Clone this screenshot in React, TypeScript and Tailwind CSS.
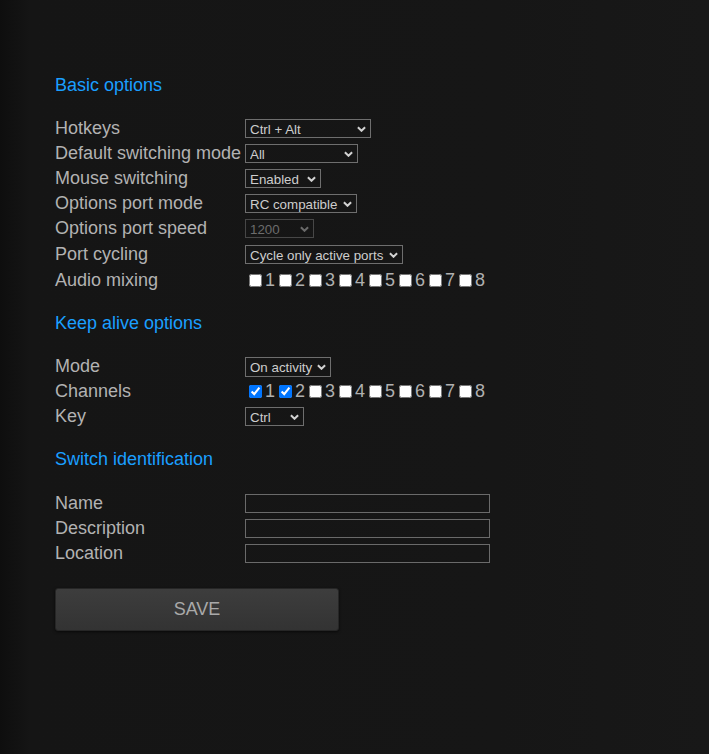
import React from "react";

const Chevron = ({ dim }: { dim?: boolean }) => (
  <svg
    viewBox="0 0 10 6"
    className="pointer-events-none absolute right-[5px] top-1/2 h-[6px] w-[9px] -translate-y-1/2"
  >
    <path
      d="M1 1 L5 5 L9 1"
      fill="none"
      stroke={dim ? "#6a6a6a" : "#d2d2d2"}
      strokeWidth="2.2"
    />
  </svg>
);

const Select = ({
  options,
  width,
  tall,
  disabled,
}: {
  options: string[];
  width: string;
  tall?: boolean;
  disabled?: boolean;
}) => (
  <span className={`relative inline-block ${width}`}>
    <select
      disabled={disabled}
      className={`block w-full appearance-none border bg-transparent pl-[4px] pr-[16px] pt-[1px] text-[13.33px] leading-[15px] outline-none ${
        tall ? "h-[20px]" : "h-[19px]"
      } ${
        disabled
          ? "border-[#474747] text-[#6c6c6c]"
          : "border-[#6e6e6e] text-[#cdcdcd]"
      }`}
    >
      {options.map((o) => (
        <option key={o} className="bg-[#151515]">
          {o}
        </option>
      ))}
    </select>
    <Chevron dim={disabled} />
  </span>
);

const Checks = ({ checked }: { checked: number[] }) => (
  <div className="flex items-center text-[18px] text-[#b0b0b0]">
    {[1, 2, 3, 4, 5, 6, 7, 8].map((n) => (
      <label key={n} className="flex items-center">
        <input
          type="checkbox"
          defaultChecked={checked.includes(n)}
          className="ml-[4px] mr-[3px] h-[13px] w-[13px]"
        />
        {n}
      </label>
    ))}
  </div>
);

const Row = ({
  label,
  children,
  tall,
}: {
  label: string;
  children: React.ReactNode;
  tall?: boolean;
}) => (
  <div className={`flex items-center ${tall ? "h-[27px]" : "h-[25px]"}`}>
    <div className="w-[190px] shrink-0 whitespace-nowrap">{label}</div>
    {children}
  </div>
);

const Heading = ({ children }: { children: React.ReactNode }) => (
  <h2 className="text-[18px] leading-[21px] font-normal text-[#1a9fff]">
    {children}
  </h2>
);

const TextInput = () => (
  <input
    type="text"
    className="h-[19px] w-[245px] border border-[#6a6a6a] bg-transparent px-1 text-[13.33px] text-[#cdcdcd] outline-none"
  />
);

export default function App() {
  return (
    <div className="min-h-screen bg-[linear-gradient(to_right,#0e0e0e,#151515_30px,#161616_70%,#181818)] pl-[55px] pt-[75px] font-['Liberation_Sans',Arial,sans-serif] text-[18px] leading-[21px] text-[#b2b2b2]">
      <Heading>Basic options</Heading>
      <div className="mt-[20px]">
        <Row label="Hotkeys">
          <Select width="w-[126px]" options={["Ctrl + Alt"]} />
        </Row>
        <Row label="Default switching mode">
          <Select width="w-[113px]" options={["All"]} />
        </Row>
        <Row label="Mouse switching">
          <Select width="w-[76px]" options={["Enabled"]} />
        </Row>
        <Row label="Options port mode">
          <Select width="w-[112px]" options={["RC compatible"]} />
        </Row>
        <Row label="Options port speed">
          <Select width="w-[69px]" options={["1200"]} disabled />
        </Row>
        <Row label="Port cycling" tall>
          <Select width="w-[158px]" options={["Cycle only active ports"]} />
        </Row>
        <Row label="Audio mixing">
          <Checks checked={[]} />
        </Row>
      </div>

      <div className="mt-[20px]">
        <Heading>Keep alive options</Heading>
      </div>
      <div className="mt-[20px]">
        <Row label="Mode">
          <Select width="w-[86px]" tall options={["On activity"]} />
        </Row>
        <Row label="Channels">
          <Checks checked={[1, 2]} />
        </Row>
        <Row label="Key">
          <Select width="w-[59px]" options={["Ctrl"]} />
        </Row>
      </div>

      <div className="mt-[20px]">
        <Heading>Switch identification</Heading>
      </div>
      <div className="mt-[21px]">
        <Row label="Name">
          <TextInput />
        </Row>
        <Row label="Description">
          <TextInput />
        </Row>
        <Row label="Location">
          <TextInput />
        </Row>
      </div>

      <button className="mt-[22px] h-[43px] w-[284px] rounded-[3px] border border-[#262626] bg-[linear-gradient(to_bottom,#3d3d3d,#333333)] text-[18px] text-[#a9a9a9] shadow-[0_1px_3px_rgba(0,0,0,0.6)]">
        SAVE
      </button>
    </div>
  );
}
